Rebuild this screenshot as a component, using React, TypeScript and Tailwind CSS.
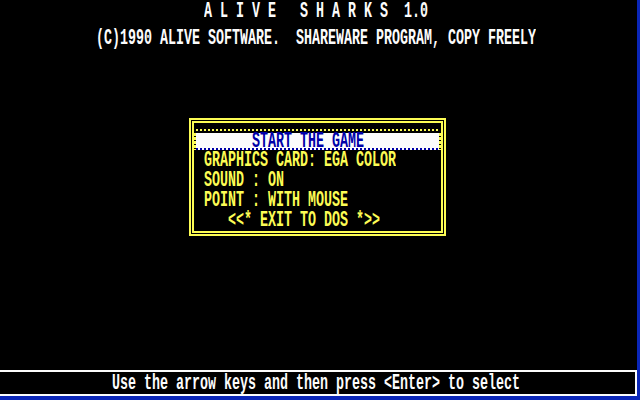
const font = { fontFamily: '"Liberation Mono", "DejaVu Sans Mono", monospace' };

function Txt({ text, className = "" }: { text: string; className?: string }) {
  return (
    <div className={`h-[12px] whitespace-pre text-[13.333px] leading-[12px] font-bold origin-top scale-y-[1.6] ${className}`}>
      {text}
    </div>
  );
}

const menu = ["GRAPHICS CARD: EGA COLOR", "SOUND : ON", "POINT : WITH MOUSE", "   <<* EXIT TO DOS *>>"];

export default function App() {
  return (
    <div style={font} className="w-[640px] h-[400px] bg-black overflow-hidden border-r-[3px] border-b-[4px] border-[#0a26b8]">
      <div className="flex flex-col h-full">
        <Txt text="A L I V E   S H A R K S  1.0" className="mt-[3px] pl-[204px] text-[#fcfcfc]" />
        <Txt
          text="(C)1990 ALIVE SOFTWARE.  SHAREWARE PROGRAM, COPY FREELY"
          className="mt-[15px] pl-[96px] text-[#fcfcfc]"
        />

        {/* menu box */}
        <div className="mt-[76px] ml-[189px] w-[257px] h-[118px] border-2 border-[#fcfc54] p-px">
          <div className="h-full border-2 border-[#fcfc54] flex flex-col">
            <div className="mt-[6px]">
              <div className="h-[2px] mx-[2px] bg-[image:repeating-linear-gradient(90deg,#fcfc54_0_2px,transparent_2px_4px)]" />
              <div className="h-[2px]" />
              <div className="flex h-[17px]">
                <div className="w-[2px] bg-[image:repeating-linear-gradient(180deg,#fcfc54_0_3px,transparent_3px_4px)]" />
                <div className="flex-1 flex flex-col bg-[#fcfcfc]">
                  <div className="h-[15px]">
                    <Txt text="START THE GAME" className="pl-[56px] text-[#0000a8]" />
                  </div>
                  <div className="h-[2px] bg-[image:repeating-linear-gradient(90deg,#0000a8_0_2px,#fcfcfc_2px_4px)]" />
                </div>
                <div className="w-[2px] bg-[image:repeating-linear-gradient(180deg,#fcfc54_0_3px,transparent_3px_4px)]" />
              </div>
            </div>
            <div className="mt-[2px] flex flex-col">
              {menu.map((m) => (
                <div key={m} className="h-[20px]">
                  <Txt text={m} className="pl-[10px] text-[#fcfc54]" />
                </div>
              ))}
            </div>
          </div>
        </div>

        {/* status bar */}
        <div className="mt-auto h-[26px] border-t-2 border-r-2 border-b-2 border-[#fcfcfc] pt-[3px]">
          <Txt text="Use the arrow keys and then press <Enter> to select" className="pl-[112px] text-[#fcfcfc]" />
        </div>
      </div>
    </div>
  );
}
